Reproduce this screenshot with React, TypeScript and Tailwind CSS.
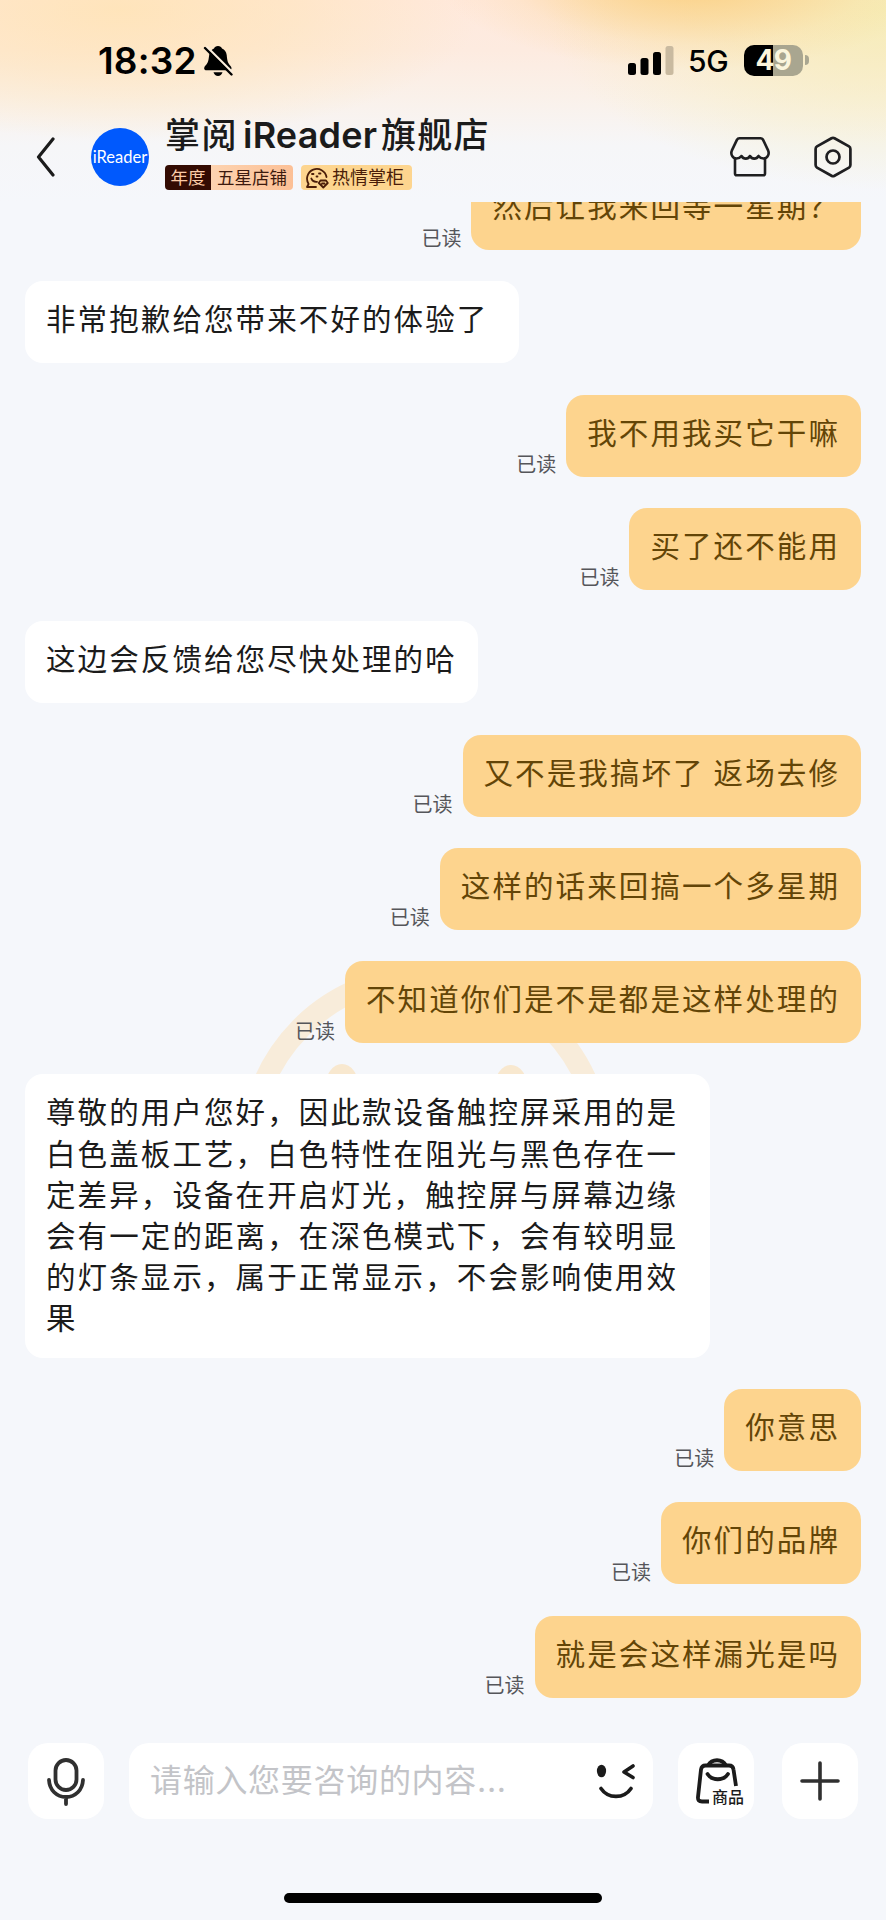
type Message = {
  text: string;
  mine?: boolean;
  className?: string;
};

const messages: Message[] = [
  { text: "然后让我来回等一星期？", mine: true },
  { text: "非常抱歉给您带来不好的体验了", className: "w-[494px]" },
  { text: "我不用我买它干嘛", mine: true },
  { text: "买了还不能用", mine: true },
  { text: "这边会反馈给您尽快处理的哈" },
  { text: "又不是我搞坏了 返场去修", mine: true },
  { text: "这样的话来回搞一个多星期", mine: true },
  { text: "不知道你们是不是都是这样处理的", mine: true },
  {
    text: "尊敬的用户您好，因此款设备触控屏采用的是白色盖板工艺，白色特性在阻光与黑色存在一定差异，设备在开启灯光，触控屏与屏幕边缘会有一定的距离，在深色模式下，会有较明显的灯条显示，属于正常显示，不会影响使用效果",
    className: "w-[685px]",
  },
  { text: "你意思", mine: true },
  { text: "你们的品牌", mine: true },
  { text: "就是会这样漏光是吗", mine: true },
];

const StatusBar = () => (
  <div className="flex h-[120px] items-start justify-between pl-[98px] pr-[77px] pt-[39px] text-black">
    <div className="flex items-center">
      <span className="w-[98px] whitespace-nowrap text-[37px] font-semibold leading-[44px] tracking-[0.2px]">18:32</span>
      <svg width="30" height="32" viewBox="0 0 30 32" className="ml-[7px]">
        <path d="M15 1c-2 0-3.500 1-4 2.600-2.600 1.200-4.300 3.400-4.800 6.400C5.500 15 5.500 17.500 2.500 20.500.6 22.500.6 25.300 3.500 25.300h22.500c2.600 0 3.300-2.300 1.500-4.300-3-3.300-3.300-6-3.800-11C23.300 7 21.600 4.800 19 3.600 18.500 2 17 1 15 1z" />
        <path d="M10.500 27.200h9c-.6 2.400-2.400 3.800-4.500 3.800s-3.900-1.400-4.500-3.800z" />
        <path d="M3.500 1.500l26 26" stroke="#fbeedd" strokeWidth="2.400" />
        <path d="M2 3l26.500 26.500" stroke="#000" strokeWidth="2.400" strokeLinecap="round" />
      </svg>
    </div>
    <div className="flex h-[42px] items-center">
      <svg width="46" height="29" viewBox="0 0 46 29">
        <rect x="0" y="17" width="8" height="12" rx="2.500" />
        <rect x="12.500" y="12" width="8" height="17" rx="2.500" />
        <rect x="25" y="6" width="8" height="23" rx="2.500" />
        <rect x="37.500" y="0" width="8" height="29" rx="2.500" fill="#c9baa0" />
      </svg>
      <span className="ml-[14px] mt-[2px] w-[56px] text-[30px] font-medium leading-[44px] tracking-[-0.3px]">5G</span>
      <div className="flex h-[31px] w-[59px] items-center justify-center rounded-[10px] bg-linear-to-r from-black from-50% to-[#a9a690] to-50% text-[28px] font-bold leading-[31px] tracking-[-0.5px] text-[#fbf5dc]">
        49
      </div>
      <div className="ml-[2px] h-[10px] w-[4px] rounded-r-full bg-[#aaa791]" />
    </div>
  </div>
);

const Header = () => (
  <header className="flex h-[82px] items-start pl-[36px] pr-[34px]">
    <svg width="20" height="40" viewBox="0 0 20 40" fill="none" stroke="#1b1b1b" strokeWidth="3.200" strokeLinecap="round" strokeLinejoin="round" className="mt-[17px]">
      <path d="M17 2L2.500 20 17 38" />
    </svg>
    <div className="ml-[35px] mt-[8px] flex size-[58px] items-center justify-center rounded-full bg-[#0059fd] font-['Lato',sans-serif] text-[16.5px] leading-none text-white">
      iReader
    </div>
    <div className="ml-[16px] -mt-[6px]">
      <h1 className="flex h-[42px] items-center whitespace-nowrap text-[35px] font-medium text-[#1b1b1b]">
        <span className="tracking-[1.5px]">掌阅</span>
        <span className="ml-[5px] mr-[7px] w-[131px] text-[36px] font-semibold tracking-[0.2px]">iReader</span>
        <span className="tracking-[1.3px]">旗舰店</span>
      </h1>
      <div className="mt-[9px] flex h-[25px] gap-2 text-[17.5px] leading-[25px]">
        <div className="flex overflow-hidden rounded">
          <span className="w-[46px] bg-[#330b02] text-center text-[#fccba7]">年度</span>
          <span className="w-[82px] bg-linear-to-r from-[#fdd3b0] to-[#fcc096] text-center text-[#3c1a0e]">五星店铺</span>
        </div>
        <div className="flex w-[111px] items-center rounded bg-[#fdd58f] pl-[4px] text-[18px] text-[#4a1d08]">
          <svg width="24" height="22" viewBox="0 0 24 22" fill="none" stroke="#4a1d08" strokeWidth="1.800" strokeLinecap="round" strokeLinejoin="round">
            <path d="M11 20H2l1.600-3A9.800 9.800 0 1 1 21.500 10" />
            <path d="M6.300 11.500c1 2.700 3 3.600 5.700 3.300M7 7h1.500M14 6.500h1.500" />
            <path d="M11.500 9.500h1" />
            <path d="M15.500 13.500h5.500l1.800 2.500-4.500 4.500-4.500-4.500zM17 16.500h2.500" />
          </svg>
          <span className="ml-[3px]">热情掌柜</span>
        </div>
      </div>
    </div>
    <div className="ml-auto mt-[16px] flex gap-[43px]">
      <svg width="42" height="42" viewBox="0 0 42 42" fill="none" stroke="#1f1f21" strokeWidth="2.600" strokeLinecap="round" strokeLinejoin="round">
        <path d="M10.500 2.300h21q1.800 0 2.600 1.600l5 10.500c1.700 4-.8 8.100-4.600 8.100-2.500 0-4-1.200-5-2.500-2 3.500-6.500 3.500-8.500 0-2 3.500-6.500 3.500-8.500 0-1 1.300-2.500 2.500-5 2.500-3.800 0-6.300-4.100-4.600-8.100l5-10.500q.8-1.600 2.600-1.600z" />
        <path d="M6 22.500v15q0 1.800 1.800 1.800h26.400q1.800 0 1.800-1.800v-15" />
      </svg>
      <svg width="38" height="42" viewBox="0 0 38 42" fill="none" stroke="#1f1f21" strokeWidth="2.700" strokeLinejoin="round">
        <path d="M17.500 2.200q1.500-.8 3 0L35 10.400q1.400.9 1.400 2.500v16.200q0 1.600-1.400 2.500L20.500 39.800q-1.500.8-3 0L3 31.600q-1.400-.9-1.400-2.500V12.900q0-1.600 1.400-2.500z" />
        <circle cx="19" cy="21" r="6.500" />
      </svg>
    </div>
  </header>
);

const Bubble = ({ text, mine, className = "" }: Message) => {
  if (!mine) {
    return (
      <div className={`min-h-[82px] shrink-0 self-start rounded-[18px] bg-white px-[21px] pb-[18px] pt-[18px] text-[#1b1b1b] ${className}`}>
        {text}
      </div>
    );
  }
  return (
    <div className="flex shrink-0 items-end gap-[10px] self-end">
      <span className="-mb-[3.5px] text-[20px] leading-[30px] tracking-normal text-[#55565a]">已读</span>
      <div className="min-h-[82px] whitespace-nowrap rounded-[18px] bg-[#fdd48e] px-[21px] pt-[18px] text-[#634507] [word-spacing:-1.5px]">{text}</div>
    </div>
  );
};

const InputBar = () => (
  <footer className="flex h-[76px] items-center px-[28px]">
    <button className="flex size-[76px] items-center justify-center rounded-[20px] bg-white">
      <svg width="40" height="50" viewBox="0 0 40 50" fill="none" stroke="#303030" strokeWidth="3.800" strokeLinecap="round">
        <rect x="9.500" y="4" width="21" height="30" rx="10.500" />
        <path d="M3 24c.5 10 7.500 17 17 17s16.500-7 17-17M20 41v7" />
      </svg>
    </button>
    <div className="ml-[25px] flex h-[76px] w-[524px] items-center justify-between rounded-[20px] bg-white pl-[21px] pr-[17px]">
      <span className="text-[32px] leading-[44px] tracking-[0.7px] text-[#c3c4c8]">请输入您要咨询的内容...</span>
      <svg width="40" height="36" viewBox="0 0 40 36" fill="none" stroke="#1b1b1b" strokeWidth="3.600" strokeLinecap="round" strokeLinejoin="round">
        <ellipse cx="5.500" cy="8" rx="4.600" ry="6.300" fill="#1b1b1b" stroke="none" />
        <path d="M37 3L28 9l9 5.500M5 25.500c7 10.500 23 10.500 30 0" />
      </svg>
    </div>
    <button className="relative ml-[25px] size-[76px] rounded-[20px] bg-white">
      <svg width="76" height="76" viewBox="0 0 76 76" fill="none" stroke="#1b1b1b" strokeWidth="3.800" strokeLinecap="butt" strokeLinejoin="round">
        <path d="M31 58.500h-7q-4.500 0-4-4.500l3-27.500q.6-4 4.500-4H51q4 0 4.500 4L58 43" />
        <path d="M30 22.500c4-7 14-7 18 0" />
        <path d="M29.500 31c4.500 7 16 7 20.500 0" strokeLinecap="round" />
      </svg>
      <span className="absolute left-[34px] top-[44px] text-[16px] font-medium leading-5 text-[#1b1b1b]">商品</span>
    </button>
    <button className="ml-[28px] flex size-[76px] items-center justify-center rounded-[20px] bg-white">
      <svg width="40" height="40" viewBox="0 0 40 40" stroke="#303030" strokeWidth="3.600" strokeLinecap="round">
        <path d="M20 2v36M2 20h36" />
      </svg>
    </button>
  </footer>
);

export default function App() {
  return (
    <div className="relative flex h-[1920px] w-[886px] flex-col overflow-hidden bg-[#f5f7fb] font-['Inter','Noto_Sans_CJK_SC',sans-serif]">
      {/* Warm glow behind the header */}
      <div className="absolute inset-x-0 top-0 h-[202px] bg-[radial-gradient(ellipse_250px_90px_at_690px_-20px,#fbcf80,#fbd08388_45%,#fbd08330_72%,#fbd08300),radial-gradient(ellipse_340px_180px_at_886px_10px,#f6edb8,#f6edb880_50%,#f6edb800),radial-gradient(ellipse_360px_130px_at_120px_10px,#ffe3b2cc,#ffe3b277_50%,#ffe3b200),linear-gradient(to_bottom,#ffe9dd,#fdebe0_25%,#faf1ea_48%,#f6f6f8_72%,#f5f7fb)]" />
      {/* Smiley watermark */}
      <svg width="380" height="380" viewBox="0 0 380 380" className="absolute left-[236px] top-[962px]">
        <circle cx="189.500" cy="190" r="176" fill="none" stroke="#f8ecda" strokeWidth="21.500" />
        <ellipse cx="106" cy="126" rx="17" ry="24" fill="#f8e8cf" />
        <ellipse cx="275" cy="127" rx="17" ry="24" fill="#f8e8cf" />
      </svg>

      <div className="relative">
        <StatusBar />
        <Header />
      </div>

      <main className="relative flex h-[1495.5px] flex-col justify-end gap-[31.3px] overflow-hidden pl-[25px] pr-[25px] text-[29.5px] leading-[41.2px] tracking-[2.1px]">
        {messages.map((message) => (
          <Bubble key={message.text} {...message} />
        ))}
      </main>

      <div className="relative mt-[45.5px]">
        <InputBar />
      </div>
      <div className="relative mx-auto mt-[74px] h-[10px] w-[318px] rounded-full bg-black" />
    </div>
  );
}
